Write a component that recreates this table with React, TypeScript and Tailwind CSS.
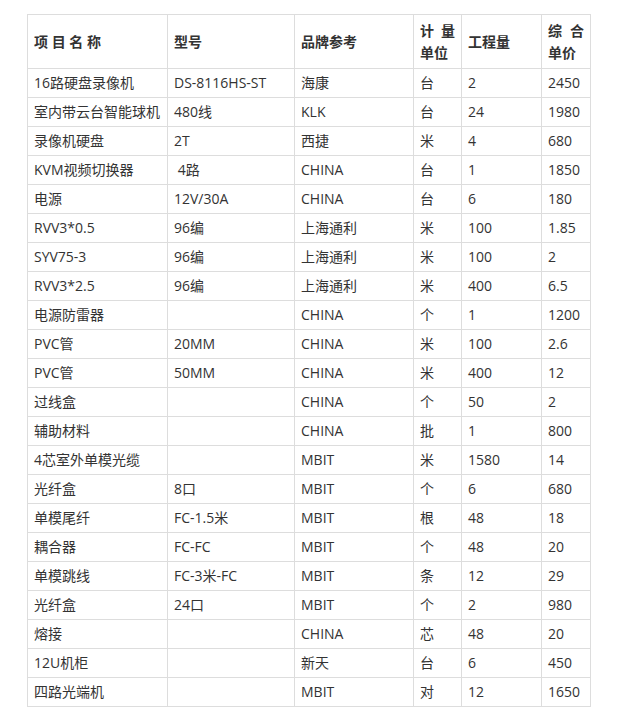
const rows: string[][] = [
  ['16路硬盘录像机', 'DS-8116HS-ST', '海康', '台', '2', '2450'],
  ['室内带云台智能球机', '480线', 'KLK', '台', '24', '1980'],
  ['录像机硬盘', '2T', '西捷', '米', '4', '680'],
  ['KVM视频切换器', '\u00a04路', 'CHINA', '台', '1', '1850'],
  ['电源', '12V/30A', 'CHINA', '台', '6', '180'],
  ['RVV3*0.5', '96编', '上海通利', '米', '100', '1.85'],
  ['SYV75-3', '96编', '上海通利', '米', '100', '2'],
  ['RVV3*2.5', '96编', '上海通利', '米', '400', '6.5'],
  ['电源防雷器', '', 'CHINA', '个', '1', '1200'],
  ['PVC管', '20MM', 'CHINA', '米', '100', '2.6'],
  ['PVC管', '50MM', 'CHINA', '米', '400', '12'],
  ['过线盒', '', 'CHINA', '个', '50', '2'],
  ['辅助材料', '', 'CHINA', '批', '1', '800'],
  ['4芯室外单模光缆', '', 'MBIT', '米', '1580', '14'],
  ['光纤盒', '8口', 'MBIT', '个', '6', '680'],
  ['单模尾纤', 'FC-1.5米', 'MBIT', '根', '48', '18'],
  ['耦合器', 'FC-FC', 'MBIT', '个', '48', '20'],
  ['单模跳线', 'FC-3米-FC', 'MBIT', '条', '12', '29'],
  ['光纤盒', '24口', 'MBIT', '个', '2', '980'],
  ['熔接', '', 'CHINA', '芯', '48', '20'],
  ['12U机柜', '', '新天', '台', '6', '450'],
  ['四路光端机', '', 'MBIT', '对', '12', '1650'],
];

export default function App() {
  return (
    <div
      className="bg-white pt-[14px] pl-[27px] text-[14px] text-[#333]"
      style={{ fontFamily: '"Open Sans", "Noto Sans CJK SC", sans-serif' }}
    >
      <table className="w-[563px] table-fixed border-collapse">
        <colgroup>
          <col className="w-[140px]" />
          <col className="w-[127px]" />
          <col className="w-[119px]" />
          <col className="w-[48px]" />
          <col className="w-[80px]" />
          <col className="w-[49px]" />
        </colgroup>
        <thead>
          <tr className="h-[54px] font-bold">
            <td className="border border-[#ddd] px-[6px] leading-[22px]">项 目 名 称</td>
            <td className="border border-[#ddd] px-[6px] leading-[22px]">型号</td>
            <td className="border border-[#ddd] px-[6px] leading-[22px]">品牌参考</td>
            <td className="border border-[#ddd] px-[6px] leading-[22px] text-justify">计量单位</td>
            <td className="border border-[#ddd] px-[6px] leading-[22px]">工程量</td>
            <td className="border border-[#ddd] px-[6px] leading-[22px] text-justify">综合单价</td>
          </tr>
        </thead>
        <tbody>
          {rows.map((r, i) => (
            <tr key={i} className="h-[29px]">
              {r.map((c, j) => (
                <td key={j} className="border border-[#ddd] px-[6px] py-0 leading-[20px] whitespace-nowrap">
                  {c}
                </td>
              ))}
            </tr>
          ))}
        </tbody>
      </table>
      <div className="h-[15px]" />
    </div>
  );
}
